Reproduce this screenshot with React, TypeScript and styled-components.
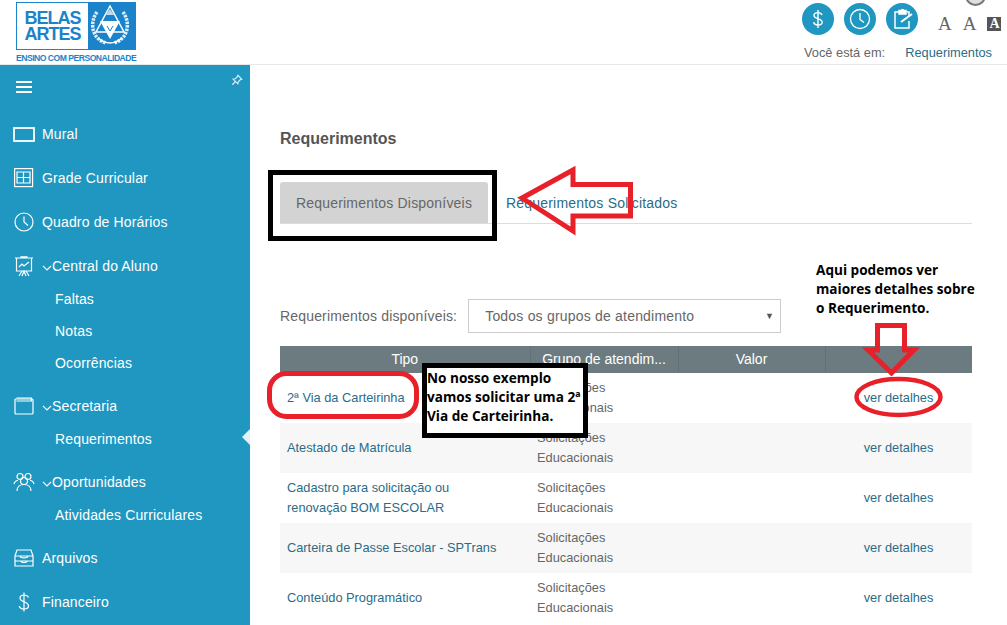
import styled, { createGlobalStyle } from 'styled-components';

const GlobalStyle = createGlobalStyle`
  html, body {
    margin: 0;
    padding: 0;
    background: #fff;
  }
  body {
    font-family: "Liberation Sans", Arial, sans-serif;
    font-size: 14px;
    color: #666;
    overflow: hidden;
  }
`;

const Page = styled.div`
  position: relative;
  width: 1007px;
  height: 625px;
  overflow: hidden;
`;

const Header = styled.header`
  display: flex;
  justify-content: space-between;
  height: 65px;
  border-bottom: 1px solid #e8e8e8;
  padding: 2px 15px 0 16px;
  box-sizing: border-box;
`;

const Logo = styled.div`
  width: 120px;
  display: flex;
  flex-direction: column;
`;

const LogoBox = styled.div`
  display: flex;
  height: 48px;
  background: #1b83c9;
  padding: 1px;
  box-sizing: border-box;
`;

const LogoWords = styled.div`
  width: 71px;
  background: #fff;
  color: #1b83c9;
  font-size: 18px;
  font-weight: 700;
  letter-spacing: -1px;
  line-height: 16px;
  text-align: center;
  padding-top: 7px;
  box-sizing: border-box;
`;

const LogoCaption = styled.div`
  color: #1b83c9;
  font-size: 8.6px;
  font-weight: 700;
  letter-spacing: -0.5px;
  line-height: 9px;
  margin-top: 4px;
  white-space: nowrap;
`;

const HeaderTools = styled.div`
  display: flex;
  flex-direction: column;
  width: 190px;
  padding-top: 1px;
`;

const ToolRow = styled.div`
  display: flex;
  align-items: center;
`;

const RoundBtn = styled.div`
  width: 32px;
  height: 32px;
  flex: none;
  border-radius: 50%;
  background: #1f97c1;
  margin-right: 10px;
  display: flex;
  align-items: center;
  justify-content: center;
`;

const FontSizes = styled.div`
  display: flex;
  align-items: center;
  flex: none;
  gap: 11px;
  margin: 10px 0 0 10px;
  font-family: "Liberation Serif", serif;
  font-size: 19px;
  color: #666;
  line-height: 14px;
`;

const InvertedA = styled.span`
  background: #555;
  color: #fff;
  font-weight: 700;
  font-size: 14px;
  line-height: 14px;
  width: 14px;
  text-align: center;
`;

const Avatar = styled.div`
  position: absolute;
  left: 965px;
  top: -15px;
  width: 17px;
  height: 17px;
  border-radius: 50%;
  background: #e3dce0;
  border: 2px solid #777;
`;

const Crumbs = styled.div`
  display: flex;
  justify-content: space-between;
  font-size: 12.8px;
  line-height: 14px;
  margin-top: 11px;
  padding-left: 2px;
  color: #666;
`;

const CrumbLink = styled.span`
  color: #2a6c88;
`;

const Body = styled.div`
  display: flex;
  height: 560px;
`;

const Sidebar = styled.nav`
  position: relative;
  width: 250px;
  flex: none;
  background: #1f97c1;
  color: #fff;
  font-size: 14px;
  letter-spacing: 0.15px;
  padding-top: 9px;
  box-sizing: border-box;
`;

const SideTop = styled.div`
  display: flex;
  justify-content: space-between;
  align-items: flex-start;
  height: 50px;
  padding: 0 7px 0 16px;
`;

const Burger = styled.div`
  width: 16px;
  margin-top: 7px;
  height: 12px;
  border-top: 2px solid #fff;
  border-bottom: 2px solid #fff;
  display: flex;
  align-items: center;
  box-sizing: border-box;
  &::before {
    content: "";
    display: block;
    width: 100%;
    height: 2px;
    background: #fff;
  }
`;

const NavItem = styled.div<{ $gap: number }>`
  display: flex;
  align-items: center;
  height: 20px;
  padding-left: 12px;
  margin-bottom: ${(p) => p.$gap}px;
  white-space: nowrap;
`;

const NavIcon = styled.span`
  width: 24px;
  height: 22px;
  margin-right: 6px;
  display: flex;
  align-items: center;
  justify-content: center;
  flex: none;
`;

const Chevron = styled.svg`
  width: 10px;
  height: 6px;
  margin-top: 3px;
  flex: none;
`;

const SubItem = styled.div<{ $gap: number }>`
  height: 20px;
  line-height: 20px;
  padding-left: 55px;
  margin-bottom: ${(p) => p.$gap}px;
`;

const ActiveMark = styled.div`
  position: absolute;
  right: 0;
  top: 364px;
  width: 0;
  height: 0;
  border-top: 8px solid transparent;
  border-bottom: 8px solid transparent;
  border-right: 8px solid #e4f2f7;
`;

const Main = styled.main`
  flex: 1;
  padding: 65px 35px 0 30px;
  min-width: 0;
`;

const Title = styled.h1`
  margin: 0 0 34px;
  font-size: 16px;
  line-height: 18px;
  font-weight: 700;
  color: #555;
`;

const Tabs = styled.div`
  display: flex;
  border-bottom: 1px solid #ddd;
  height: 41px;
  margin-bottom: 75px;
`;

const Tab = styled.div<{ $active?: boolean }>`
  width: ${(p) => (p.$active ? '208px' : 'auto')};
  box-sizing: border-box;
  text-align: ${(p) => (p.$active ? 'center' : 'left')};
  padding-left: ${(p) => (p.$active ? '0' : '18px')};
  background: ${(p) => (p.$active ? '#d3d3d3' : 'transparent')};
  border-radius: 3px 3px 0 0;
  color: ${(p) => (p.$active ? '#666' : '#2a6c88')};
  font-size: 14px;
  letter-spacing: 0.2px;
  line-height: 43px;
`;

const FilterRow = styled.div`
  display: flex;
  align-items: center;
  gap: 11px;
  height: 34px;
  margin-bottom: 13px;
`;

const FilterLabel = styled.label`
  font-size: 14px;
  letter-spacing: 0.17px;
  color: #666;
  white-space: nowrap;
`;

const FakeSelect = styled.div`
  display: flex;
  justify-content: space-between;
  align-items: center;
  width: 313px;
  height: 34px;
  box-sizing: border-box;
  border: 1px solid #ccc;
  padding: 0 6px 0 16px;
  font-size: 14px;
  letter-spacing: 0.2px;
  color: #666;
`;

const SelectCaret = styled.span`
  font-size: 9px;
  color: #555;
`;

const Table = styled.table`
  width: 692px;
  border-collapse: collapse;
  table-layout: fixed;
  font-size: 12.8px;
`;

const Th = styled.th<{ $w: number }>`
  box-sizing: border-box;
  width: ${(p) => p.$w}px;
  height: 27px;
  padding: 0 0 2px;
  background: #6c7b80;
  color: #fff;
  font-size: 14px;
  font-weight: 400;
  text-align: center;
  border-right: 1px solid #62717a;
  &:last-child { border-right: 0; }
`;

const Tr = styled.tr<{ $odd: boolean }>`
  height: 50px;
  background: ${(p) => (p.$odd ? '#f7f7f7' : '#fff')};
`;

const LinkCell = styled.td`
  padding: 0 7px;
  color: #2a6c88;
  line-height: 20px;
`;

const GroupCell = styled.td`
  padding: 0 7px;
  color: #666;
  line-height: 20px;
`;

const ValueCell = styled.td``;

const DetailCell = styled.td`
  color: #2a6c88;
  line-height: 20px;
  text-align: center;
`;

const BlackFrame = styled.div`
  position: absolute;
  left: 268px;
  top: 170px;
  width: 229px;
  height: 71px;
  box-sizing: border-box;
  border: 5px solid #000;
`;

const NoteBox = styled.div`
  position: absolute;
  left: 422px;
  top: 363px;
  width: 166px;
  height: 75px;
  box-sizing: border-box;
  border: 5px solid #000;
  background: #fff;
  color: #000;
  font-family: "Open Sans", sans-serif;
  font-size: 13.6px;
  font-weight: 700;
  line-height: 19px;
`;

const NoteText = styled.div`
  position: absolute;
  left: 816px;
  top: 260px;
  width: 165px;
  color: #000;
  font-family: "Open Sans", sans-serif;
  font-size: 13.6px;
  font-weight: 700;
  line-height: 19px;
`;

const Marks = styled.svg`
  position: absolute;
  left: 0;
  top: 0;
  pointer-events: none;
`;

const rows: [string, string?][] = [
  ['2ª Via da Carteirinha'],
  ['Atestado de Matrícula'],
  ['Cadastro para solicitação ou', 'renovação BOM ESCOLAR'],
  ['Carteira de Passe Escolar - SPTrans'],
  ['Conteúdo Programático'],
];

const line = { fill: 'none', stroke: '#fff', strokeWidth: 1.2 };

function Emblem() {
  return (
    <svg width="46" height="46" viewBox="0 0 46 46">
      <path d="M9 9C1 20 4 36 18 40M35 9C43 20 40 36 26 40" fill="none" stroke="#fff" strokeWidth="3.500" strokeDasharray="2.500 1" opacity=".85" />
      <path d="M22 3L36 29H8Z" fill="none" stroke="#fff" strokeWidth="1.500" />
      <path d="M12 18H32L22 36Z" fill="#fff" />
      <path d="M19 23l3 5 3-5" fill="none" stroke="#1b83c9" strokeWidth="1" />
      <path d="M18 12H26L22 6Z" fill="#fff" opacity=".7" />
      <path d="M10 35Q22 45 34 35" fill="none" stroke="#fff" strokeWidth="1.500" />
    </svg>
  );
}

function Down() {
  return (
    <Chevron viewBox="0 0 10 6">
      <path d="M1 1l4 4 4-4" fill="none" stroke="#fff" strokeWidth="1.1" />
    </Chevron>
  );
}

export default function App() {
  return (
    <Page>
      <GlobalStyle />
      <Header>
        <Logo>
          <LogoBox>
            <LogoWords>BELAS<br />ARTES</LogoWords>
            <Emblem />
          </LogoBox>
          <LogoCaption>ENSINO COM PERSONALIDADE</LogoCaption>
        </Logo>
        <HeaderTools>
          <ToolRow>
            <RoundBtn>
              <svg width="22" height="22" viewBox="0 0 22 22" fill="none" stroke="#fff" strokeWidth="1.4">
                <path d="M15 7c-.5-1.6-2-2.400-4-2.400-2.400 0-4 1.200-4 3 0 4 8.200 2.400 8.200 6.400 0 1.900-1.800 3-4.200 3-2.200 0-3.900-1-4.400-2.800M11 2v18" />
              </svg>
            </RoundBtn>
            <RoundBtn>
              <svg width="24" height="24" viewBox="0 0 24 24" fill="none" stroke="#fff" strokeWidth="1.3">
                <circle cx="12" cy="12" r="9.500" />
                <path d="M12 6v6.500l4 3" />
              </svg>
            </RoundBtn>
            <RoundBtn>
              <svg width="24" height="24" viewBox="0 0 24 24" fill="none" stroke="#fff" strokeWidth="1.500">
                <path d="M17 5h2v4M9 5H5v16h14v-7" />
                <path d="M9 3.500h2.500a1 1 0 0 1 2 0H16V7H9z" fill="#fff" />
                <path d="M11 15l11-8" strokeWidth="2" />
              </svg>
            </RoundBtn>
            <FontSizes>
              <span>A</span>
              <span>A</span>
              <InvertedA>A</InvertedA>
            </FontSizes>
          </ToolRow>
          <Crumbs>
            <span>Você está em:</span>
            <CrumbLink>Requerimentos</CrumbLink>
          </Crumbs>
        </HeaderTools>
      </Header>
      <Avatar />

      <Body>
        <Sidebar>
          <SideTop>
            <Burger />
            <svg width="12" height="12" viewBox="0 0 14 14" fill="none" stroke="#d5edf5" strokeWidth="1.400">
              <path d="M8 1.500l4.500 4.500-1.500.5L8.500 9 8 11.500 2.500 6 5 5.500 7.500 3zM5 9l-3.500 3.500" />
            </svg>
          </SideTop>
          <NavItem $gap={24}>
            <NavIcon>
              <svg width="22" height="15" viewBox="0 0 22 15"><rect x="1" y="1" width="20" height="13" {...line} strokeWidth={1.800} /></svg>
            </NavIcon>
            Mural
          </NavItem>
          <NavItem $gap={24}>
            <NavIcon>
              <svg width="20" height="20" viewBox="0 0 20 20"><rect x=".6" y=".6" width="18" height="18" {...line} /><path d="M3 4h13v11H3zM9.500 4v11M3 9.500h13" {...line} /></svg>
            </NavIcon>
            Grade Curricular
          </NavItem>
          <NavItem $gap={24}>
            <NavIcon>
              <svg width="20" height="20" viewBox="0 0 20 20"><circle cx="10" cy="10" r="9" {...line} /><path d="M10 4.500V10l4 3.500" {...line} /></svg>
            </NavIcon>
            Quadro de Horários
          </NavItem>
          <NavItem $gap={13}>
            <NavIcon>
              <svg width="20" height="21" viewBox="0 0 20 21"><path d="M1 2h18M7 2V.8h6V2M2.500 2v13h15V2M8 20l2-5 2 5M5 20l3-5M15 20l-3-5" {...line} /><path d="M5 11l3-3 2 2 5-4" {...line} /></svg>
            </NavIcon>
            <Down />
            Central do Aluno
          </NavItem>
          <SubItem $gap={12}>Faltas</SubItem>
          <SubItem $gap={12}>Notas</SubItem>
          <SubItem $gap={23}>Ocorrências</SubItem>
          <NavItem $gap={13}>
            <NavIcon>
              <svg width="20" height="18" viewBox="0 0 20 18"><rect x="1" y="2" width="18" height="15" rx="1" {...line} /><path d="M2.500 1h15v3h-15" {...line} /></svg>
            </NavIcon>
            <Down />
            Secretaria
          </NavItem>
          <SubItem $gap={23}>Requerimentos</SubItem>
          <NavItem $gap={13}>
            <NavIcon>
              <svg width="22" height="20" viewBox="0 0 22 20"><circle cx="7" cy="4.500" r="3" {...line} /><circle cx="15" cy="4.500" r="3" {...line} /><circle cx="11" cy="9" r="3.500" {...line} /><path d="M4 19c0-4 3-6.500 7-6.500s7 2.500 7 6.500M1 12c.5-2 2-3.500 4-3.500M21 12c-.5-2-2-3.500-4-3.500" {...line} /></svg>
            </NavIcon>
            <Down />
            Oportunidades
          </NavItem>
          <SubItem $gap={23}>Atividades Curriculares</SubItem>
          <NavItem $gap={24}>
            <NavIcon>
              <svg width="20" height="18" viewBox="0 0 20 18"><path d="M1 7l2-6h14l2 6M1 7v10h18V7zM1 12h18M1 7h5c0 2.500 8 2.500 8 0h5M7 12c0 2 6 2 6 0" {...line} /></svg>
            </NavIcon>
            Arquivos
          </NavItem>
          <NavItem $gap={0}>
            <NavIcon>
              <svg width="14" height="20" viewBox="0 0 14 20"><path d="M11.500 5.500C11 4 9.500 3 7 3 4.500 3 3 4.200 3 6c0 4.500 8.500 3 8.500 8 0 2-2 3-4.500 3-2.500 0-4.200-1-4.800-3M7 .5v19" {...line} /></svg>
            </NavIcon>
            Financeiro
          </NavItem>
          <ActiveMark />
        </Sidebar>

        <Main>
          <Title>Requerimentos</Title>
          <Tabs>
            <Tab $active>Requerimentos Disponíveis</Tab>
            <Tab>Requerimentos Solicitados</Tab>
          </Tabs>
          <FilterRow>
            <FilterLabel>Requerimentos disponíveis:</FilterLabel>
            <FakeSelect>
              Todos os grupos de atendimento
              <SelectCaret>▼</SelectCaret>
            </FakeSelect>
          </FilterRow>
          <Table>
            <thead>
              <tr>
                <Th $w={250}>Tipo</Th>
                <Th $w={148}>Grupo de atendim...</Th>
                <Th $w={147}>Valor</Th>
                <Th $w={147}></Th>
              </tr>
            </thead>
            <tbody>
              {rows.map(([a, b], i) => (
                <Tr key={a} $odd={i % 2 === 1}>
                  <LinkCell>{a}{b && <><br />{b}</>}</LinkCell>
                  <GroupCell>Solicitações<br />Educacionais</GroupCell>
                  <ValueCell />
                  <DetailCell>ver detalhes</DetailCell>
                </Tr>
              ))}
            </tbody>
          </Table>
        </Main>
      </Body>

      <BlackFrame />
      <NoteBox>No nosso exemplo vamos solicitar uma 2ª Via de Carteirinha.</NoteBox>
      <NoteText>Aqui podemos ver maiores detalhes sobre o Requerimento.</NoteText>
      <Marks width="1007" height="625" viewBox="0 0 1007 625" fill="none" stroke="#e8202a" strokeWidth="5">
        <path d="M522 198L573 170V184.500H630.500V216H573V231Z" />
        <path d="M877.500 325.500H904.500V350H914L891.500 373L868 350H877.500Z" />
        <rect x="269.500" y="373.500" width="147" height="43" rx="17" />
        <ellipse cx="898.500" cy="397" rx="42" ry="18" strokeWidth="4.500" />
      </Marks>
    </Page>
  );
}
